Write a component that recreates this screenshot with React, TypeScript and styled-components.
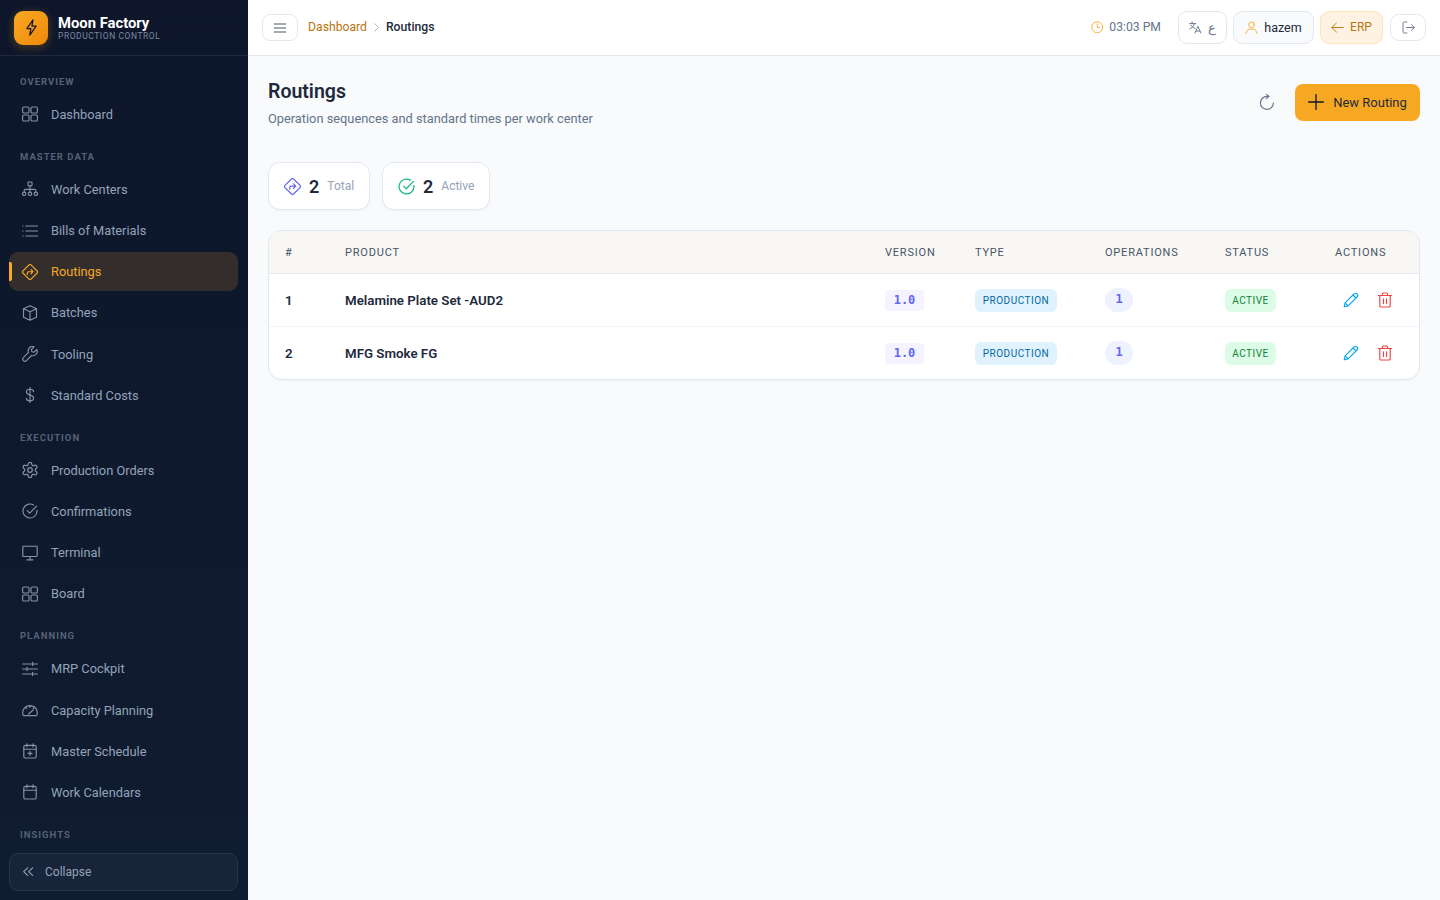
import type { ReactNode } from "react";
import styled, { createGlobalStyle } from "styled-components";

const FONT = `"Roboto", "Noto Sans", sans-serif`;

const GlobalStyle = createGlobalStyle`
  * { box-sizing: border-box; }
  html, body { margin: 0; height: 100%; }
  body {
    font-family: ${FONT};
    background: #f8fafc;
    overflow: hidden;
  }
`;

// line icons, drawn on a 16 unit grid
const Svg = styled.svg.attrs<{ viewBox?: string; strokeWidth?: number }>((p) => ({
  viewBox: p.viewBox ?? "0 0 16 16",
  fill: "none",
  stroke: "currentColor",
  strokeWidth: p.strokeWidth ?? 1.15,
  strokeLinecap: "round",
  strokeLinejoin: "round",
}))`
  width: 1em;
  height: 1em;
  display: block;
  flex-shrink: 0;
`;

const IconGrid = () => (
  <Svg>
    <rect x="0.6" y="1" width="6.4" height="6" rx="1.3" />
    <rect x="9" y="1" width="6.4" height="6" rx="1.3" />
    <rect x="0.6" y="9" width="6.4" height="6" rx="1.3" />
    <rect x="9" y="9" width="6.4" height="6" rx="1.3" />
  </Svg>
);
const IconSitemap = () => (
  <Svg>
    <rect x="6" y="1" width="4" height="3.8" rx="0.8" />
    <path d="M8 4.8V11M2.2 11V9.3a1 1 0 0 1 1-1h9.6a1 1 0 0 1 1 1V11" />
    <circle cx="2.2" cy="12.8" r="1.7" />
    <circle cx="8" cy="12.8" r="1.7" />
    <circle cx="13.8" cy="12.8" r="1.7" />
  </Svg>
);
const IconList = () => (
  <Svg>
    <path d="M3.8 3h11.7M3.8 8h11.7M3.8 13h11.7M.7 3h.4M.7 8h.4M.7 13h.4" />
  </Svg>
);
const IconDirections = () => (
  <Svg>
    <path d="M7 .9a1.4 1.4 0 0 1 2 0l6.1 6.1a1.4 1.4 0 0 1 0 2L9 15.1a1.4 1.4 0 0 1-2 0L.9 9a1.4 1.4 0 0 1 0-2z" />
    <path d="M5.4 10.4V8.7a1 1 0 0 1 1-1h4.4M9 5.6l2 2.1-2 2.1" />
  </Svg>
);
const IconBox = () => (
  <Svg>
    <path d="M8 .8l6.5 2.9v8.5L8 15.2l-6.5-3V3.7zM1.5 3.7L8 6.8l6.5-3.1M8 6.8v8.4" />
  </Svg>
);
const IconWrench = () => (
  <Svg>
    <path d="M14.8 3.5l-2.7 2.7-2.2-.5-.5-2.2L12.1.8a4.3 4.3 0 0 0-5.6 5.6l-5.2 5.2a2.2 2.2 0 0 0 3.1 3.1l5.2-5.2a4.3 4.3 0 0 0 5.2-6z" />
  </Svg>
);
const IconDollar = () => (
  <Svg>
    <path d="M11.6 4.6C11.5 3 10 2.2 8 2.2 6 2.2 4.4 3.2 4.4 5c0 2 2.1 2.5 3.6 3 1.5.5 3.6 1 3.6 3 0 1.8-1.6 2.8-3.6 2.8-2 0-3.5-.8-3.6-2.4M8 .4v15.2" />
  </Svg>
);
const IconGear = () => (
  <Svg viewBox="1.5 1.5 21 21" strokeWidth={1.6}>
    <path d="M12.22 2h-.44a2 2 0 0 0-2 2v.18a2 2 0 0 1-1 1.73l-.43.25a2 2 0 0 1-2 0l-.15-.08a2 2 0 0 0-2.73.73l-.22.38a2 2 0 0 0 .73 2.73l.15.1a2 2 0 0 1 1 1.72v.51a2 2 0 0 1-1 1.74l-.15.09a2 2 0 0 0-.73 2.73l.22.38a2 2 0 0 0 2.73.73l.15-.08a2 2 0 0 1 2 0l.43.25a2 2 0 0 1 1 1.73V20a2 2 0 0 0 2 2h.44a2 2 0 0 0 2-2v-.18a2 2 0 0 1 1-1.73l.43-.25a2 2 0 0 1 2 0l.15.08a2 2 0 0 0 2.73-.73l.22-.39a2 2 0 0 0-.73-2.73l-.15-.08a2 2 0 0 1-1-1.74v-.5a2 2 0 0 1 1-1.74l.15-.09a2 2 0 0 0 .73-2.73l-.22-.38a2 2 0 0 0-2.73-.73l-.15.08a2 2 0 0 1-2 0l-.43-.25a2 2 0 0 1-1-1.73V4a2 2 0 0 0-2-2z" />
    <circle cx="12" cy="12" r="3" />
  </Svg>
);
const IconCheckCircle = () => (
  <Svg>
    <path d="M15 7.2V8a7 7 0 1 1-3.4-6" />
    <path d="M5.2 7.6l2.5 2.5 6.9-6.9" />
  </Svg>
);
const IconDesktop = () => (
  <Svg>
    <rect x="0.8" y="1.2" width="14.4" height="10.3" rx="0.9" />
    <path d="M8 11.5v3.2M5 14.8h6" />
  </Svg>
);
const IconSliders = () => (
  <Svg>
    <path d="M.6 3h14.8M.6 8h14.8M.6 13h14.8M10.6 1.4v3.2M5 6.4v3.2M10.6 11.4v3.2" />
  </Svg>
);
const IconGauge = () => (
  <Svg>
    <path d="M2 13.6h12a1 1 0 0 0 1-.8A7.2 7.2 0 0 0 8 3.6a7.2 7.2 0 0 0-7 9.2 1 1 0 0 0 1 .8z" />
    <path d="M8 3.6v1.8M3.6 5.4l1.2 1.3M12.4 5.4l-1.2 1.3M6.6 12l4.6-4" />
  </Svg>
);
const IconCalendar = () => (
  <Svg>
    <rect x="1.8" y="2.4" width="12.4" height="12.6" rx="1.6" />
    <path d="M1.8 6.2h12.4M5 .8v3M11 .8v3" />
  </Svg>
);
const IconCalendarPlus = () => (
  <Svg>
    <rect x="1.8" y="2.4" width="12.4" height="12.6" rx="1.6" />
    <path d="M1.8 6.2h12.4M5 .8v3M11 .8v3M8 8.4v4M6 10.4h4" />
  </Svg>
);
const IconDoubleLeft = () => (
  <Svg strokeWidth={1.5}>
    <path d="M7.6 2.6L2.2 7.6l5.4 5M14.2 2.6L8.8 7.6l5.4 5" />
  </Svg>
);
const IconBolt = () => (
  <Svg>
    <path d="M9.4.8L3.6 9h3.8l-1 6.2L12.4 6.8H8.4z" />
  </Svg>
);
const IconBars = () => (
  <Svg>
    <path d="M1.4 3.4h13.2M1.4 8h13.2M1.4 12.6h13.2" />
  </Svg>
);
const IconAngleRight = () => (
  <Svg>
    <path d="M5.5 2.5L11 8l-5.5 5.5" />
  </Svg>
);
const IconClock = () => (
  <Svg>
    <circle cx="8" cy="8" r="7" />
    <path d="M8 3.8v4.5h3" />
  </Svg>
);
const IconLanguage = () => (
  <Svg>
    <path d="M.6 3.2h7.8M3.8 1v2.2M6.6 3.2C6 6 3.6 8.4 1 9.6M2.4 5.2C3.4 7 5.4 8.4 7.4 9M7.4 14.8L11 6.6l3.6 8.2M8.6 12.4h4.800" />
  </Svg>
);
const IconUser = () => (
  <Svg>
    <circle cx="8" cy="4.6" r="3.5" />
    <path d="M1.4 15c.3-3.2 2.6-5 5-5h3.2c2.4 0 4.700 1.8 5 5" />
  </Svg>
);
const IconArrowLeft = () => (
  <Svg>
    <path d="M15.2 8H1M6.6 2.6L1 8l5.6 5.4" />
  </Svg>
);
const IconSignOut = () => (
  <Svg>
    <path d="M6 1.2H2.8a1.5 1.5 0 0 0-1.5 1.5v10.6a1.5 1.5 0 0 0 1.5 1.5H6M5.6 8h9.6M11.6 4.4L15.2 8l-3.6 3.6" />
  </Svg>
);
const IconRefresh = () => (
  <Svg>
    <path d="M14.4 9a6.5 6.5 0 1 1-6.4-6.6h1.8" />
    <path d="M7.4.4l2.4 2-2.4 2.2" />
  </Svg>
);
const IconPlus = () => (
  <Svg strokeWidth={1.3}>
    <path d="M8 .6v14.8M.6 8h14.8" />
  </Svg>
);
const IconPencil = () => (
  <Svg>
    <path d="M1.2 14.8l.9-3.9 8.900-8.900a2.1 2.1 0 0 1 3 3l-8.900 8.900zM2.100 10.900l3 3M10 3l3 3" />
  </Svg>
);
const IconTrash = () => (
  <Svg>
    <path d="M1.4 3.5h13.2M5.4 3.5V2a1 1 0 0 1 1-1h3.2a1 1 0 0 1 1 1v1.500M2.800 3.500V14a1 1 0 0 0 1 1h8.400a1 1 0 0 0 1-1V3.500M6.500 6.800v4.800M9.500 6.800v4.800" />
  </Svg>
);

const Shell = styled.div`
  display: flex;
  width: 100vw;
  height: 100vh;
`;

const Sidebar = styled.aside`
  width: 248px;
  flex-shrink: 0;
  height: 100%;
  background: linear-gradient(180deg, #0d162b 0%, #101c30 100%);
  display: flex;
  flex-direction: column;
`;

const Brand = styled.div`
  height: 56px;
  flex-shrink: 0;
  padding: 0 14px;
  display: flex;
  align-items: center;
  gap: 10px;
  border-bottom: 1px solid #1e293b;
`;

const LogoBox = styled.div`
  width: 34px;
  height: 34px;
  border-radius: 9px;
  background: linear-gradient(135deg, #f9a825, #ee8a0a);
  box-shadow: 0 2px 10px rgba(245, 158, 11, 0.3);
  color: #0f172a;
  display: flex;
  align-items: center;
  justify-content: center;
  font-size: 17px;
`;

const BrandText = styled.div`
  display: flex;
  flex-direction: column;
`;

const BrandName = styled.div`
  color: #fff;
  font-size: 14.8px;
  line-height: 16px;
  font-weight: 700;
`;

const BrandSub = styled.div`
  color: #7c8aa0;
  font-size: 8.5px;
  line-height: 10px;
  letter-spacing: 0.55px;
  text-transform: uppercase;
`;

const Nav = styled.nav`
  flex: 1;
  min-height: 0;
  overflow: hidden;
  padding: 5px 10px 0 9px;
`;

const SectionLabel = styled.div`
  color: #556277;
  font-size: 9.5px;
  font-weight: 700;
  letter-spacing: 1px;
  line-height: 12px;
  text-transform: uppercase;
  padding: 15px 11px 7px;
  height: 33.8px;
`;

const NavItem = styled.div<{ $active?: boolean }>`
  position: relative;
  height: 39.2px;
  margin-bottom: 2px;
  border-radius: 9px;
  padding-left: 12.5px;
  display: flex;
  align-items: center;
  gap: 13.5px;
  font-size: 12.8px;
  color: ${(p) => (p.$active ? "#f9a825" : "#94a3b8")};
  background: ${(p) => (p.$active ? "#332e2c" : "transparent")};

  svg {
    font-size: 16px;
    color: ${(p) => (p.$active ? "#f9a825" : "#8592a8")};
  }

  &::before {
    content: "";
    display: ${(p) => (p.$active ? "block" : "none")};
    position: absolute;
    left: 0;
    top: 10px;
    bottom: 10px;
    width: 3px;
    border-radius: 0 2px 2px 0;
    background: #f9a825;
  }
`;

const CollapseWrap = styled.div`
  flex-shrink: 0;
  padding: 9px 10px 9px 9px;
  background: #101c30;
  margin-top: -6px;
  position: relative;
`;

const CollapseBtn = styled.div`
  height: 38px;
  border-radius: 9px;
  border: 1px solid #283548;
  background: #18243a;
  color: #94a3b8;
  font-size: 12px;
  display: flex;
  align-items: center;
  gap: 11px;
  padding-left: 12px;

  svg {
    font-size: 12px;
  }
`;

const Main = styled.main`
  flex: 1;
  min-width: 0;
  display: flex;
  flex-direction: column;
`;

const Topbar = styled.header`
  height: 56px;
  flex-shrink: 0;
  background: #fff;
  border-bottom: 1px solid #e2e8f0;
  display: flex;
  align-items: center;
  padding: 0 14px;
`;

const MenuBtn = styled.button`
  width: 36px;
  height: 27px;
  padding: 0;
  border: 1px solid #e2e8f0;
  border-radius: 8px;
  background: #fff;
  color: #475569;
  font-size: 14px;
  display: flex;
  align-items: center;
  justify-content: center;
`;

const Crumbs = styled.div`
  display: flex;
  align-items: center;
  margin-left: 10px;
  margin-top: -1px;
  font-size: 12.2px;
`;

const CrumbLink = styled.span`
  color: #b8730f;
`;

const CrumbSep = styled.span`
  color: #94a3b8;
  margin: 0 4px;
  display: flex;
  font-size: 11px;
`;

const CrumbNow = styled.span`
  color: #1e293b;
  font-weight: 500;
`;

const TopRight = styled.div`
  margin-left: auto;
  display: flex;
  align-items: center;
  gap: 6px;
`;

const Clock = styled.div`
  display: flex;
  align-items: center;
  gap: 6px;
  padding-bottom: 1px;
  font-size: 12.2px;
  color: #64748b;
  margin-right: 11px;

  svg {
    color: #f9a825;
    font-size: 12.5px;
  }
`;

const TopBtn = styled.div<{ $variant?: "lang" | "user" | "erp" | "out" }>`
  display: flex;
  align-items: center;
  justify-content: center;
  height: ${(p) => (p.$variant === "out" ? "27px" : "33px")};
  width: ${(p) =>
    p.$variant === "lang" ? "49px" : p.$variant === "user" ? "81px" : p.$variant === "erp" ? "63px" : "36px"};
  margin-left: ${(p) => (p.$variant === "out" ? "1px" : "0")};
  padding-bottom: 1px;
  border-radius: 9px;
  border: 1px solid ${(p) => (p.$variant === "erp" ? "#fde3b8" : "#e2e8f0")};
  background: ${(p) => (p.$variant === "erp" ? "#fef3e2" : p.$variant === "user" ? "#f8fafc" : "#fff")};
  color: ${(p) => (p.$variant === "erp" ? "#b8730f" : p.$variant === "user" ? "#1e293b" : "#64748b")};
  font-size: ${(p) => (p.$variant === "erp" ? "12px" : "12.5px")};
  gap: 6px;

  svg {
    font-size: 13px;
    color: ${(p) => (p.$variant === "user" ? "#f9a825" : "inherit")};
  }
`;

const Content = styled.div`
  flex: 1;
  padding: 19px 20px 0;
`;

const PageHead = styled.div`
  display: flex;
  align-items: center;
  justify-content: space-between;
  height: 54px;
  margin-bottom: 33px;
`;

const TitleBlock = styled.div`
  display: flex;
  flex-direction: column;
  gap: 2px;
  padding-top: 1px;
`;

const Title = styled.h1`
  margin: 0;
  color: #1e293b;
  font-size: 19.5px;
  line-height: 30px;
  font-weight: 600;
`;

const Subtitle = styled.p`
  margin: 0;
  color: #64748b;
  font-size: 12.8px;
  line-height: 20px;
`;

const HeadActions = styled.div`
  display: flex;
  align-items: center;
  gap: 20px;
`;

const RefreshIcon = styled.span`
  display: flex;
  color: #64748b;
  font-size: 16px;
`;

const NewBtn = styled.button`
  width: 125px;
  height: 37px;
  border: 0;
  border-radius: 8px;
  background: #f7a823;
  color: #1e293b;
  font-family: ${FONT};
  font-size: 13px;
  display: flex;
  align-items: center;
  justify-content: center;
  gap: 9px;

  svg {
    font-size: 16px;
    color: #0f172a;
  }
`;

const Stats = styled.div`
  display: flex;
  gap: 12px;
  margin-bottom: 20px;
`;

const StatCard = styled.div<{ $width: number }>`
  width: ${(p) => p.$width}px;
  height: 48px;
  border: 1px solid #e2e8f0;
  border-radius: 12px;
  background: #fff;
  box-shadow: 0 1px 2px rgba(15, 23, 42, 0.04);
  display: flex;
  align-items: center;
  padding-left: 15px;
`;

const StatIcon = styled.span<{ $color: string }>`
  display: flex;
  color: ${(p) => p.$color};
  font-size: 17px;
  margin-right: 8px;
`;

const StatValue = styled.span`
  color: #1e293b;
  font-size: 18px;
  font-weight: 600;
  margin-right: 8px;
`;

const StatLabel = styled.span`
  color: #94a3b8;
  font-size: 12px;
`;

const TableCard = styled.div`
  background: #fff;
  border: 1px solid #e2e8f0;
  border-radius: 14px;
  box-shadow: 0 1px 2px rgba(15, 23, 42, 0.04);
  overflow: hidden;
`;

const Table = styled.table`
  width: 100%;
  table-layout: fixed;
  border-collapse: collapse;
`;

const Th = styled.th<{ $width?: number }>`
  width: ${(p) => (p.$width ? `${p.$width}px` : "auto")};
  height: 42px;
  padding: 1px 0 0 16px;
  background: #f8f7f3;
  border-bottom: 1px solid #e2e8f0;
  color: #475569;
  font-size: 11px;
  font-weight: 400;
  letter-spacing: 0.8px;
  text-align: left;
  text-transform: uppercase;
`;

const Row = styled.tr`
  height: 53px;
  border-bottom: 1px solid #f1f5f9;

  &:last-child {
    border-bottom: 0;
  }
`;

const Td = styled.td<{ $strong?: boolean }>`
  padding: 1px 0 0 16px;
  color: #1e293b;
  font-size: 13.3px;
  font-weight: ${(p) => (p.$strong ? 600 : 400)};
`;

const VersionTag = styled.span`
  display: inline-block;
  width: 39px;
  height: 21px;
  line-height: 21px;
  text-align: center;
  border-radius: 4px;
  background: #f5f3ff;
  color: #6366f1;
  font-family: "DejaVu Sans Mono", "Liberation Mono", monospace;
  font-size: 12px;
  font-weight: 700;
`;

const Pill = styled.span<{ $bg: string; $fg: string; $width: number }>`
  display: inline-block;
  width: ${(p) => p.$width}px;
  height: 23px;
  line-height: 23px;
  text-align: center;
  border-radius: 6px;
  background: ${(p) => p.$bg};
  color: ${(p) => p.$fg};
  font-size: 10px;
  letter-spacing: 0.5px;
`;

const OpsCount = styled.span`
  display: inline-block;
  width: 28px;
  height: 24px;
  line-height: 23px;
  border-radius: 12px;
  text-align: center;
  background: #eef2ff;
  color: #6366f1;
  font-family: "DejaVu Sans Mono", "Liberation Mono", monospace;
  font-size: 12px;
  font-weight: 700;
`;

const Actions = styled.div`
  display: flex;
  align-items: center;
  gap: 18px;
  padding-left: 8px;
`;

const ActionIcon = styled.span<{ $color: string }>`
  display: flex;
  color: ${(p) => p.$color};
  font-size: 16px;
`;

type Item = { name: string; icon: ReactNode; active?: boolean };

const sections: { label: string; items: Item[] }[] = [
  { label: "Overview", items: [{ name: "Dashboard", icon: <IconGrid /> }] },
  {
    label: "Master Data",
    items: [
      { name: "Work Centers", icon: <IconSitemap /> },
      { name: "Bills of Materials", icon: <IconList /> },
      { name: "Routings", icon: <IconDirections />, active: true },
      { name: "Batches", icon: <IconBox /> },
      { name: "Tooling", icon: <IconWrench /> },
      { name: "Standard Costs", icon: <IconDollar /> },
    ],
  },
  {
    label: "Execution",
    items: [
      { name: "Production Orders", icon: <IconGear /> },
      { name: "Confirmations", icon: <IconCheckCircle /> },
      { name: "Terminal", icon: <IconDesktop /> },
      { name: "Board", icon: <IconGrid /> },
    ],
  },
  {
    label: "Planning",
    items: [
      { name: "MRP Cockpit", icon: <IconSliders /> },
      { name: "Capacity Planning", icon: <IconGauge /> },
      { name: "Master Schedule", icon: <IconCalendarPlus /> },
      { name: "Work Calendars", icon: <IconCalendar /> },
    ],
  },
  { label: "Insights", items: [] },
];

const routings = [
  { id: 1, product: "Melamine Plate Set -AUD2" },
  { id: 2, product: "MFG Smoke FG" },
];

export default function App() {
  return (
    <>
      <GlobalStyle />
      <Shell>
        <Sidebar>
          <Brand>
            <LogoBox>
              <IconBolt />
            </LogoBox>
            <BrandText>
              <BrandName>Moon Factory</BrandName>
              <BrandSub>Production Control</BrandSub>
            </BrandText>
          </Brand>
          <Nav>
            {sections.map((section) => (
              <div key={section.label}>
                <SectionLabel>{section.label}</SectionLabel>
                {section.items.map((item) => (
                  <NavItem key={item.name} $active={item.active}>
                    {item.icon}
                    {item.name}
                  </NavItem>
                ))}
              </div>
            ))}
          </Nav>
          <CollapseWrap>
            <CollapseBtn>
              <IconDoubleLeft />
              Collapse
            </CollapseBtn>
          </CollapseWrap>
        </Sidebar>

        <Main>
          <Topbar>
            <MenuBtn>
              <IconBars />
            </MenuBtn>
            <Crumbs>
              <CrumbLink>Dashboard</CrumbLink>
              <CrumbSep>
                <IconAngleRight />
              </CrumbSep>
              <CrumbNow>Routings</CrumbNow>
            </Crumbs>
            <TopRight>
              <Clock>
                <IconClock />
                03:03 PM
              </Clock>
              <TopBtn $variant="lang">
                <IconLanguage />ع
              </TopBtn>
              <TopBtn $variant="user">
                <IconUser />
                hazem
              </TopBtn>
              <TopBtn $variant="erp">
                <IconArrowLeft />
                ERP
              </TopBtn>
              <TopBtn $variant="out">
                <IconSignOut />
              </TopBtn>
            </TopRight>
          </Topbar>

          <Content>
            <PageHead>
              <TitleBlock>
                <Title>Routings</Title>
                <Subtitle>Operation sequences and standard times per work center</Subtitle>
              </TitleBlock>
              <HeadActions>
                <RefreshIcon>
                  <IconRefresh />
                </RefreshIcon>
                <NewBtn>
                  <IconPlus />
                  New Routing
                </NewBtn>
              </HeadActions>
            </PageHead>

            <Stats>
              <StatCard $width={102}>
                <StatIcon $color="#6366f1">
                  <IconDirections />
                </StatIcon>
                <StatValue>2</StatValue>
                <StatLabel>Total</StatLabel>
              </StatCard>
              <StatCard $width={108}>
                <StatIcon $color="#10b981">
                  <IconCheckCircle />
                </StatIcon>
                <StatValue>2</StatValue>
                <StatLabel>Active</StatLabel>
              </StatCard>
            </Stats>

            <TableCard>
              <Table>
                <thead>
                  <tr>
                    <Th $width={60}>#</Th>
                    <Th>Product</Th>
                    <Th $width={90}>Version</Th>
                    <Th $width={130}>Type</Th>
                    <Th $width={120}>Operations</Th>
                    <Th $width={110}>Status</Th>
                    <Th $width={100}>Actions</Th>
                  </tr>
                </thead>
                <tbody>
                  {routings.map((r) => (
                    <Row key={r.id}>
                      <Td $strong>{r.id}</Td>
                      <Td $strong>{r.product}</Td>
                      <Td>
                        <VersionTag>1.0</VersionTag>
                      </Td>
                      <Td>
                        <Pill $bg="#e0f2fe" $fg="#0369a1" $width={82}>
                          PRODUCTION
                        </Pill>
                      </Td>
                      <Td>
                        <OpsCount>1</OpsCount>
                      </Td>
                      <Td>
                        <Pill $bg="#dcfce7" $fg="#15803d" $width={51}>
                          ACTIVE
                        </Pill>
                      </Td>
                      <Td>
                        <Actions>
                          <ActionIcon $color="#0ea5e9">
                            <IconPencil />
                          </ActionIcon>
                          <ActionIcon $color="#ef4444">
                            <IconTrash />
                          </ActionIcon>
                        </Actions>
                      </Td>
                    </Row>
                  ))}
                </tbody>
              </Table>
            </TableCard>
          </Content>
        </Main>
      </Shell>
    </>
  );
}
